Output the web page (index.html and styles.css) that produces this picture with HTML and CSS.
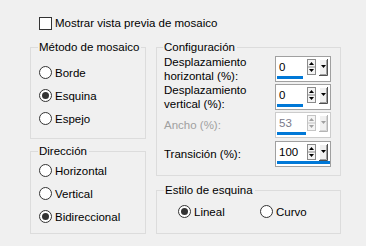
FILE: index.html
```html
<!DOCTYPE html>
<html lang="es">
<head>
  <meta charset="UTF-8">
  <title>Mosaico</title>
  <link rel="stylesheet" href="styles.css">
</head>
<body>
  <div class="page">
    <div class="check-row"><span class="checkbox"></span>Mostrar vista previa de mosaico</div>

    <div class="columns">
      <div class="col">
        <!-- Método de mosaico -->
        <div class="group group-method">
          <div class="group-title">Método de mosaico</div>
          <div class="radio-list">
            <div class="radio"><span class="dot"></span>Borde</div>
            <div class="radio checked"><span class="dot"></span>Esquina</div>
            <div class="radio"><span class="dot"></span>Espejo</div>
          </div>
        </div>

        <!-- Dirección -->
        <div class="group group-direction">
          <div class="group-title">Dirección</div>
          <div class="radio-list">
            <div class="radio"><span class="dot"></span>Horizontal</div>
            <div class="radio"><span class="dot"></span>Vertical</div>
            <div class="radio checked"><span class="dot"></span>Bidireccional</div>
          </div>
        </div>
      </div>

      <div class="col">
        <!-- Configuración -->
        <div class="group group-config">
          <div class="group-title">Configuración</div>
          <div class="fields">
            <div class="field-label">Desplazamiento<br>horizontal (%):</div>
            <div class="spin">
              <div class="spin-main">
                <div class="spin-value">0</div>
                <svg class="spin-arrows" width="9" height="16" viewBox="0 0 9 16">
                  <rect x="0.5" y="0.5" width="8" height="15" fill="#f4f4f4" stroke="#8a8a8a"/>
                  <line x1="0" y1="8" x2="9" y2="8" stroke="#8a8a8a"/>
                  <path d="M2 6h5L4.5 3z" fill="#000"/>
                  <path d="M2 10h5L4.5 13z" fill="#000"/>
                </svg>
                <svg class="spin-drop" width="9" height="17" viewBox="0 0 9 17">
                  <rect x="0" y="0" width="9" height="17" fill="#f0f0f0"/>
                  <path d="M0.5 16.5V0.5h8" fill="none" stroke="#fff"/>
                  <path d="M0 16.5h8.5V0" fill="none" stroke="#505050"/>
                  <path d="M1 15.5h6.5V1" fill="none" stroke="#a0a0a0"/>
                  <path d="M2 6h5L4.5 9z" fill="#000"/>
                </svg>
              </div>
              <div class="spin-bar" style="width: 26px"></div>
            </div>

            <div class="field-label">Desplazamiento<br>vertical (%):</div>
            <div class="spin">
              <div class="spin-main">
                <div class="spin-value">0</div>
                <svg class="spin-arrows" width="9" height="16" viewBox="0 0 9 16">
                  <rect x="0.5" y="0.5" width="8" height="15" fill="#f4f4f4" stroke="#8a8a8a"/>
                  <line x1="0" y1="8" x2="9" y2="8" stroke="#8a8a8a"/>
                  <path d="M2 6h5L4.5 3z" fill="#000"/>
                  <path d="M2 10h5L4.5 13z" fill="#000"/>
                </svg>
                <svg class="spin-drop" width="9" height="17" viewBox="0 0 9 17">
                  <rect x="0" y="0" width="9" height="17" fill="#f0f0f0"/>
                  <path d="M0.5 16.5V0.5h8" fill="none" stroke="#fff"/>
                  <path d="M0 16.5h8.5V0" fill="none" stroke="#505050"/>
                  <path d="M1 15.5h6.5V1" fill="none" stroke="#a0a0a0"/>
                  <path d="M2 6h5L4.5 9z" fill="#000"/>
                </svg>
              </div>
              <div class="spin-bar" style="width: 26px"></div>
            </div>

            <div class="field-label disabled">Ancho (%):</div>
            <div class="spin disabled">
              <div class="spin-main">
                <div class="spin-value">53</div>
                <svg class="spin-arrows" width="9" height="16" viewBox="0 0 9 16">
                  <rect x="0.5" y="0.5" width="8" height="15" fill="#f4f4f4" stroke="#c4c4c4"/>
                  <line x1="0" y1="8" x2="9" y2="8" stroke="#c4c4c4"/>
                  <path d="M2 6h5L4.5 3z" fill="#a0a0a0"/>
                  <path d="M2 10h5L4.5 13z" fill="#a0a0a0"/>
                </svg>
                <svg class="spin-drop" width="9" height="17" viewBox="0 0 9 17">
                  <rect x="0" y="0" width="9" height="17" fill="#f0f0f0"/>
                  <path d="M0.5 16.5V0.5h8" fill="none" stroke="#fff"/>
                  <path d="M0 16.5h8.5V0" fill="none" stroke="#b4b4b4"/>
                  <path d="M1 15.5h6.5V1" fill="none" stroke="#d4d4d4"/>
                  <path d="M2 6h5L4.5 9z" fill="#a0a0a0"/>
                </svg>
              </div>
              <div class="spin-bar" style="width: 29px"></div>
            </div>

            <div class="field-label">Transición (%):</div>
            <div class="spin">
              <div class="spin-main">
                <div class="spin-value">100</div>
                <svg class="spin-arrows" width="9" height="16" viewBox="0 0 9 16">
                  <rect x="0.5" y="0.5" width="8" height="15" fill="#f4f4f4" stroke="#8a8a8a"/>
                  <line x1="0" y1="8" x2="9" y2="8" stroke="#8a8a8a"/>
                  <path d="M2 6h5L4.5 3z" fill="#000"/>
                  <path d="M2 10h5L4.5 13z" fill="#000"/>
                </svg>
                <svg class="spin-drop" width="9" height="17" viewBox="0 0 9 17">
                  <rect x="0" y="0" width="9" height="17" fill="#f0f0f0"/>
                  <path d="M0.5 16.5V0.5h8" fill="none" stroke="#fff"/>
                  <path d="M0 16.5h8.5V0" fill="none" stroke="#505050"/>
                  <path d="M1 15.5h6.5V1" fill="none" stroke="#a0a0a0"/>
                  <path d="M2 6h5L4.5 9z" fill="#000"/>
                </svg>
              </div>
              <div class="spin-bar" style="width: 53px"></div>
            </div>
          </div>
        </div>

        <!-- Estilo de esquina -->
        <div class="group group-corner">
          <div class="group-title">Estilo de esquina</div>
          <div class="radio-row">
            <div class="radio checked"><span class="dot"></span>Lineal</div>
            <div class="radio"><span class="dot"></span>Curvo</div>
          </div>
        </div>
      </div>
    </div>
  </div>
</body>
</html>
```

FILE: styles.css
```css
body, html {
  margin: 0;
  padding: 0;
  background-color: #f0f0f0; /* dialog grey */
  color: #000;
  font-family: "Liberation Sans", Arial, sans-serif;
  font-size: 11.5px;
  line-height: 14px;
}
.page {
  padding: 16px 0 0 30px;
}
.check-row {
  display: flex;
  align-items: center;
  gap: 3px;
  height: 14px;
  padding-left: 9px;
}
.checkbox {
  width: 13px;
  height: 13px;
  box-sizing: border-box;
  border: 1px solid #333;
  background-color: #fff;
}
/* Two columns of group boxes */
.columns {
  display: grid;
  grid-template-columns: 116px 185px;
  column-gap: 10px;
  margin-top: 17px;
}
.col {
  display: flex;
  flex-direction: column;
}
.group {
  border: 1px solid #dcdcdc;
  padding: 0 8px;
}
.group-title {
  width: fit-content;
  white-space: nowrap;
  margin: -8px 0 0 -1px;
  padding: 0 2px 0 1px;
  background-color: #f0f0f0;
}
.radio {
  display: flex;
  align-items: center;
  gap: 3px;
  height: 23px;
}
.dot {
  display: grid;
  place-items: center;
  width: 13px;
  height: 13px;
  box-sizing: border-box;
  border: 1px solid #333;
  border-radius: 50%;
  background-color: #fff;
}
.radio.checked .dot::after {
  content: "";
  width: 7px;
  height: 7px;
  border-radius: 50%;
  background-color: #333;
}
.group-method .radio-list {
  margin-top: 7px;
  padding-bottom: 8px;
}
.group-direction {
  margin-top: 12px;
}
.group-direction .radio-list {
  margin-top: 1px;
  padding-bottom: 5px;
}
/* Configuración */
.group-config {
  padding: 0 9px 7px 7px;
}
.fields {
  display: grid;
  grid-template-columns: 1fr 56px;
  grid-template-rows: 28px 28px 28px 29px;
  align-items: center;
  padding-top: 1px;
}
.field-label.disabled {
  color: #a0a0a0;
}
.spin {
  height: 26px;
  box-sizing: border-box;
  border: 1px solid #a0a0a0;
  background-color: #fff;
}
.spin-main {
  display: flex;
  align-items: flex-start;
  height: 19px;
}
.spin-value {
  flex: 1;
  padding: 3px 0 0 3px;
}
.spin-arrows {
  display: block;
  margin-top: 2px;
}
.spin-drop {
  display: block;
  margin: 2px 2px 0 3px;
}
.spin-bar {
  height: 3px;
  margin-left: 1px;
  background-color: #0078d7;
}
.spin.disabled {
  border-color: #cccccc;
}
.spin.disabled .spin-value {
  color: #7a7a8a;
}
/* Estilo de esquina */
.group-corner {
  margin-top: 14px;
  padding: 0 8px 10px 21px;
}
.group-corner .group-title {
  margin-left: -14px;
}
.radio-row {
  display: flex;
  margin-top: 3px;
}
.radio-row .radio:first-child {
  width: 82px;
}
```
